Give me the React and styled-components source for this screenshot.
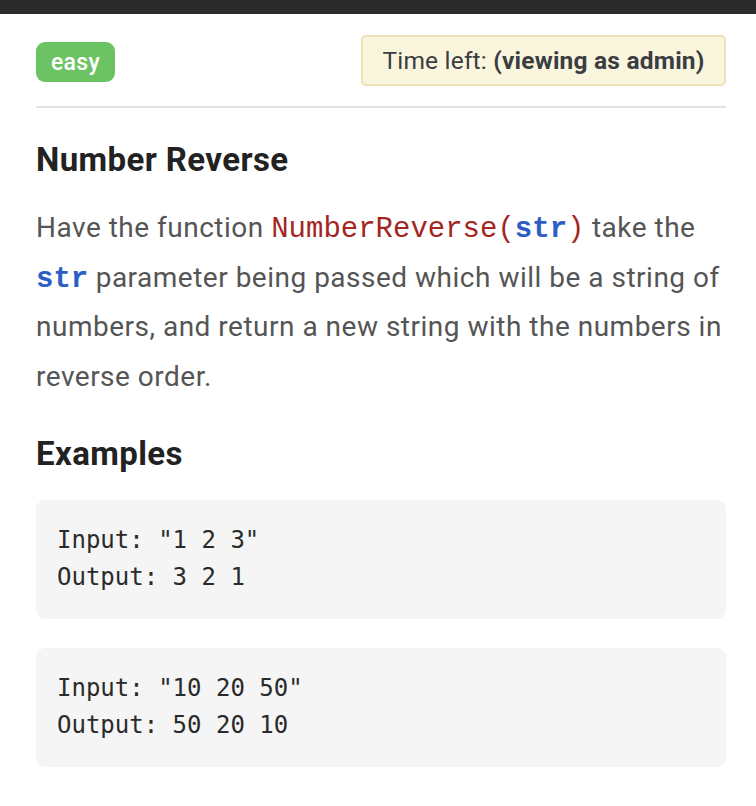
import React from "react";
import styled, { createGlobalStyle } from "styled-components";

const GlobalStyle = createGlobalStyle`
  html, body {
    margin: 0;
    padding: 0;
    background: #fff;
  }
  body {
    font-family: Roboto, "Liberation Sans", sans-serif;
  }
`;

const examples = [
  { input: '"1 2 3"', output: "3 2 1" },
  { input: '"10 20 50"', output: "50 20 10" },
];

const App = () => {
  return (
    <>
      <GlobalStyle />
      <TopBar />
      <Page>
        <Header>
          <Badge>easy</Badge>
          <Timer>
            Time left: <b>(viewing as admin)</b>
          </Timer>
        </Header>
        <Title>Number Reverse</Title>
        <Description>
          Have the function <Code>NumberReverse(<Param>str</Param>)</Code>{" "}
          take the <Param>str</Param> parameter being passed which will be a
          string of numbers, and return a new string with the numbers in
          reverse order.
        </Description>
        <SubTitle>Examples</SubTitle>
        <ExampleList>
          {examples.map((ex, i) => (
            <ExampleBox key={i}>
              Input: {ex.input}
              {"\n"}Output: {ex.output}
            </ExampleBox>
          ))}
        </ExampleList>
      </Page>
    </>
  );
};

const TopBar = styled.div`
  height: 14px;
  background: #2a2a2a;
`;

const Page = styled.div`
  padding: 0 30px 0 36px;
`;

const Header = styled.div`
  display: flex;
  align-items: center;
  justify-content: space-between;
  padding: 21px 0 20px;
  border-bottom: 2px solid #e2e2e2;
`;

const Badge = styled.span`
  display: inline-flex;
  align-items: center;
  height: 40px;
  padding: 0 15px;
  margin-top: 3px;
  border-radius: 9px;
  background: #6cc363;
  color: #fff;
  font-size: 23px;
  font-weight: 500;
  letter-spacing: 0.3px;
`;

const Timer = styled.div`
  box-sizing: border-box;
  height: 51px;
  width: 365px;
  padding: 0 10px;
  background: #faf6dd;
  border: 2px solid #ebe2b8;
  border-radius: 5px;
  color: #3a3d42;
  font-size: 24.5px;
  line-height: 47px;
  letter-spacing: 0.2px;
  text-align: center;
  white-space: nowrap;

  b {
    font-weight: 700;
  }
`;

const Title = styled.h1`
  margin: 32px 0 0;
  font-size: 33px;
  font-weight: 700;
  letter-spacing: 0.4px;
  color: #222;
  line-height: 40px;
`;

const Description = styled.p`
  margin: 23px 0 0;
  font-size: 28px;
  letter-spacing: 0.5px;
  line-height: 49.5px;
  color: #555;
`;

const Code = styled.code`
  font-family: "Liberation Mono", monospace;
  font-size: 29px;
  line-height: 1;
  letter-spacing: 0;
  color: #a3261f;
`;

const Param = styled.code`
  font-family: "Liberation Mono", monospace;
  font-size: 29px;
  line-height: 1;
  letter-spacing: 0;
  font-weight: 700;
  color: #2d5ec6;
`;

const SubTitle = styled.h2`
  margin: 33px 0 0;
  font-size: 33px;
  font-weight: 700;
  letter-spacing: 0.4px;
  color: #222;
  line-height: 40px;
`;

const ExampleList = styled.div`
  display: flex;
  flex-direction: column;
  gap: 29px;
  margin-top: 26px;
`;

const ExampleBox = styled.pre`
  margin: 0;
  height: 119px;
  box-sizing: border-box;
  padding: 22px 21px;
  background: #f5f5f5;
  border-radius: 9px;
  font-family: "DejaVu Sans Mono", monospace;
  font-size: 24px;
  line-height: 37px;
  color: #2a2a2a;
  white-space: pre;
`;

export default App;
